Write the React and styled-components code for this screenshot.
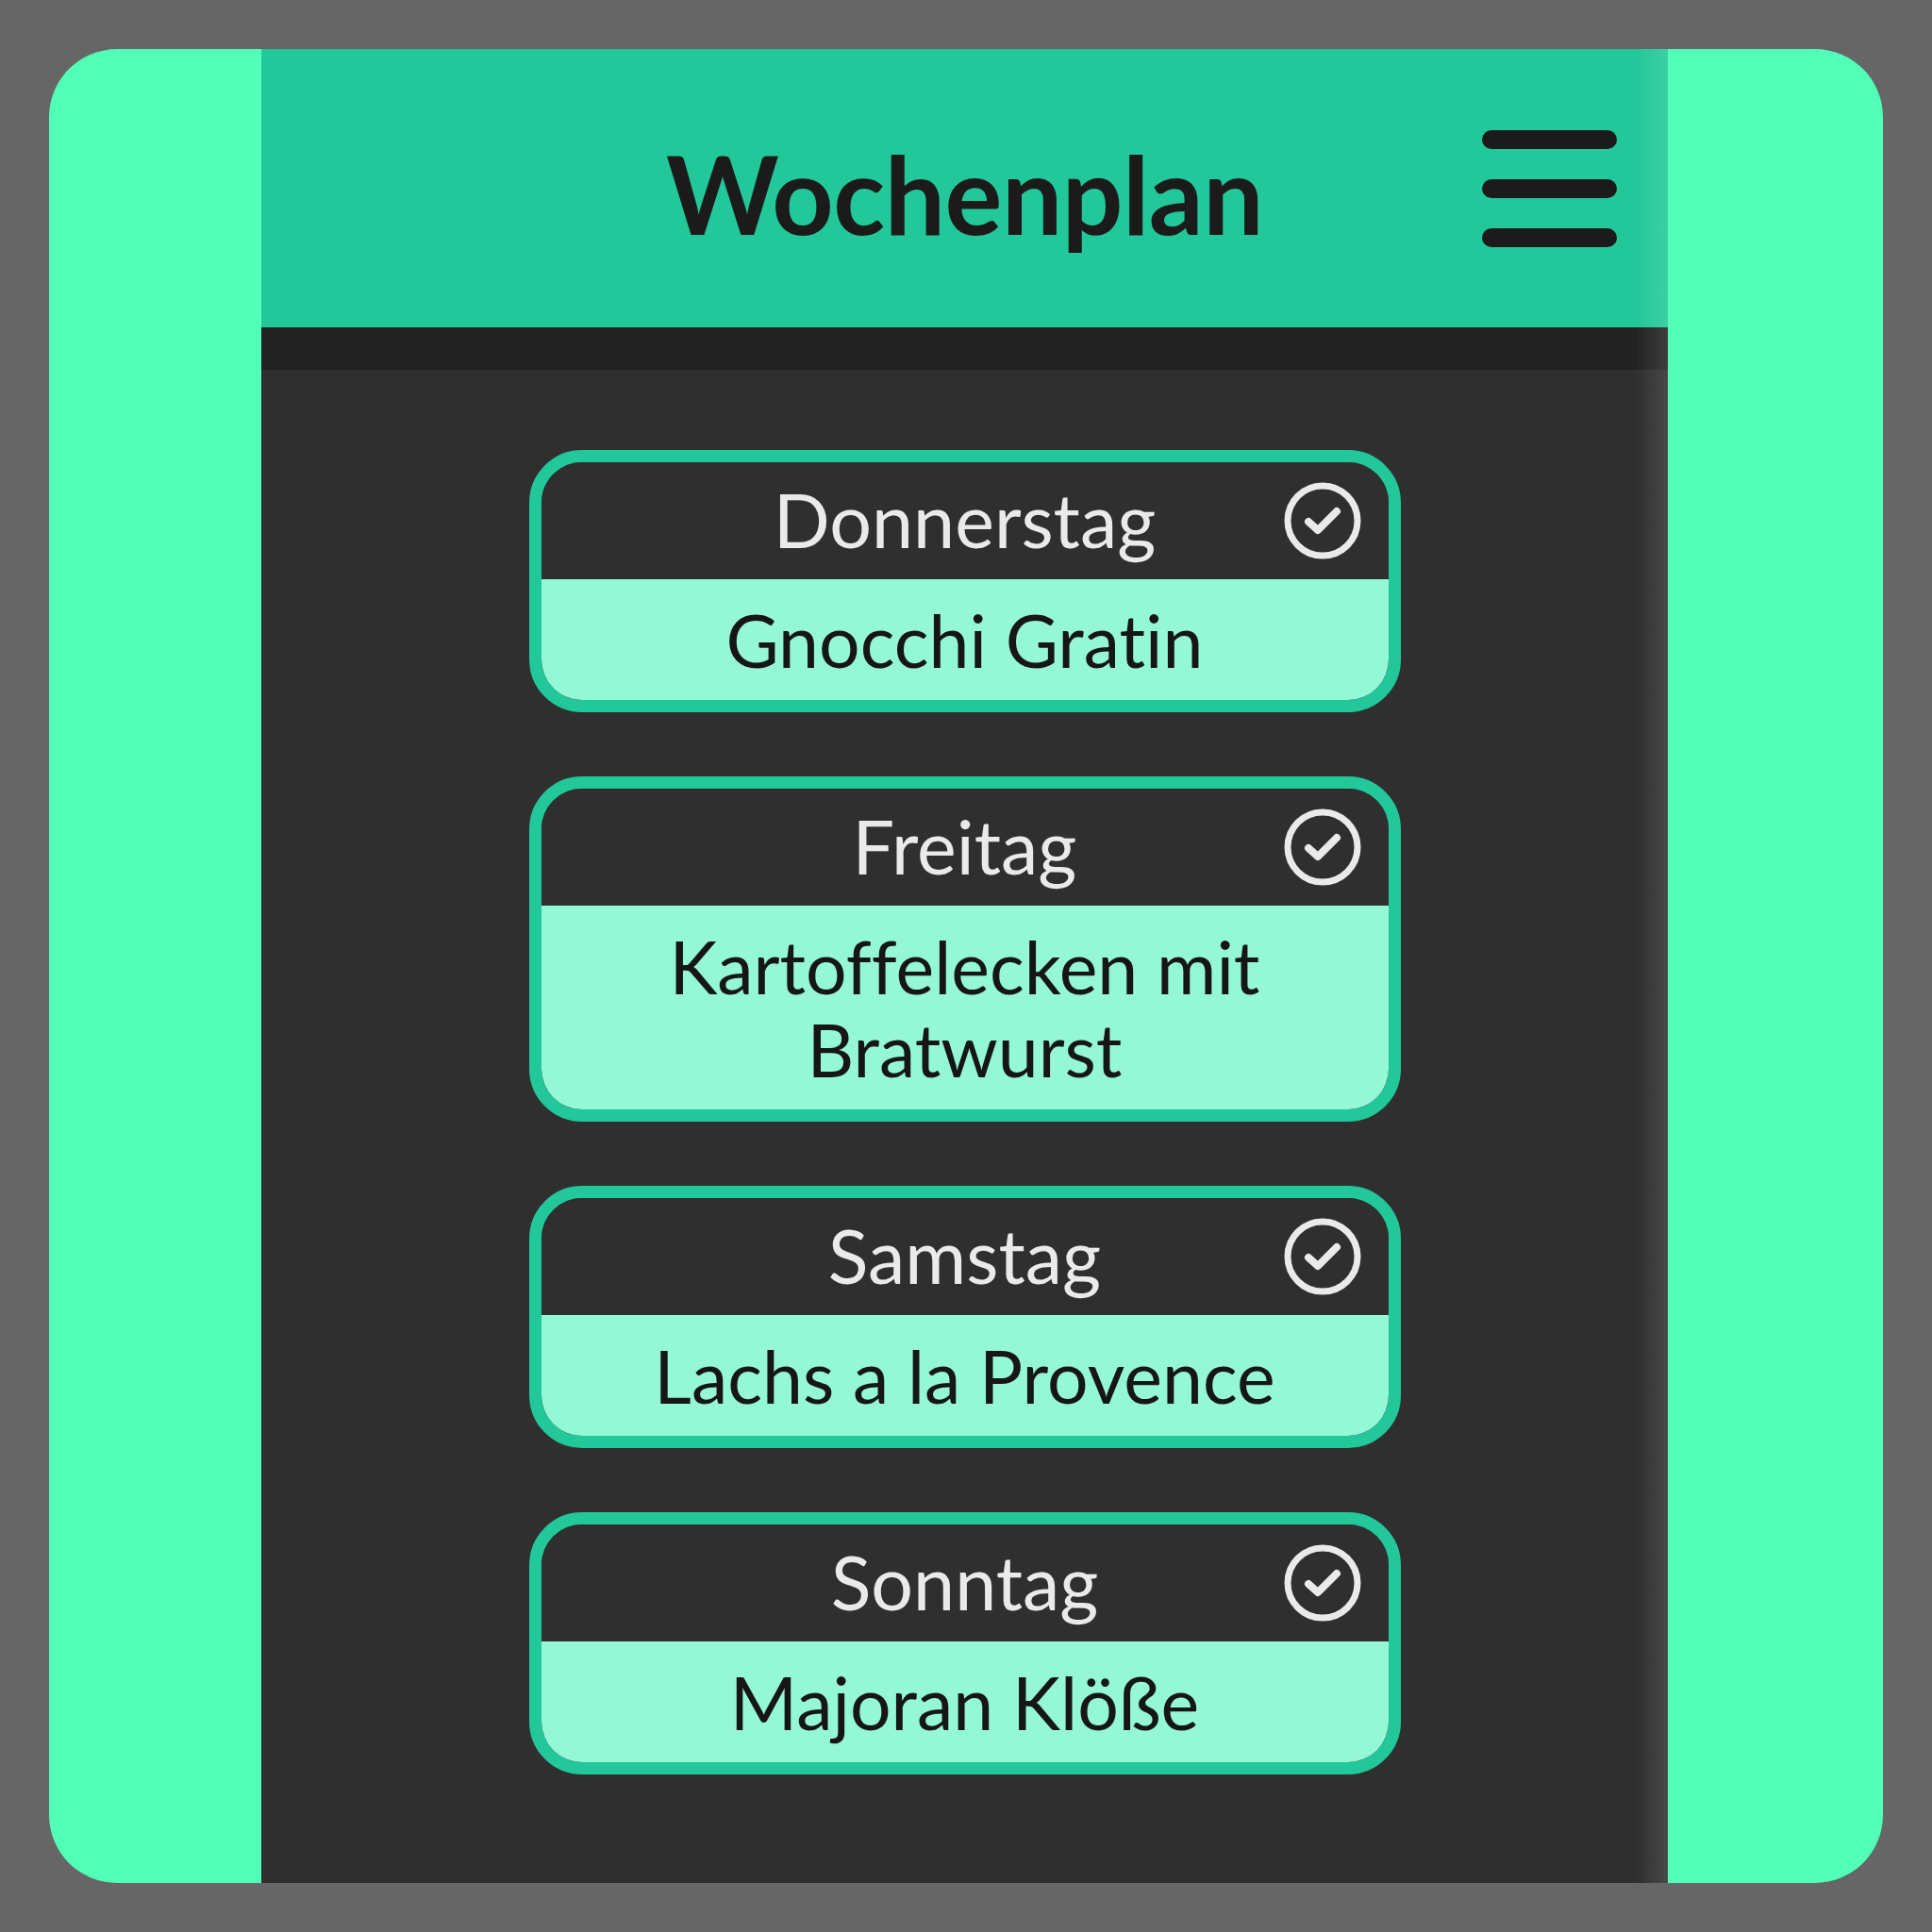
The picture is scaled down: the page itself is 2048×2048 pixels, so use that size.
import React from "react";
import styled, { createGlobalStyle } from "styled-components";

const Global = createGlobalStyle`
  html, body { margin: 0; padding: 0; background: #666666; }
  * { box-sizing: border-box; }
  body { font-family: Lato, "Noto Sans", sans-serif; font-variant-ligatures: none; }
`;

const Page = styled.div`
  width: 2048px;
  height: 2048px;
  padding: 52px;
  background: #666666;
`;

const Frame = styled.div`
  width: 1944px;
  height: 1944px;
  border-radius: 72px;
  overflow: hidden;
  background: #52ffb7;
  display: grid;
  grid-template-columns: 225px 1491px 228px;
`;

const Column = styled.div`
  position: relative;
  display: flex;
  flex-direction: column;
  background: #2f2f2f;
  &::after {
    content: "";
    position: absolute;
    top: 0;
    right: 0;
    bottom: 0;
    width: 34px;
    pointer-events: none;
    background: linear-gradient(to right, rgba(255,255,255,0), rgba(255,255,255,0.12));
  }
`;

const Header = styled.header`
  height: 340px;
  background: #22c89a;
  border-bottom: 45px solid #232323;
  display: grid;
  grid-template-columns: 1fr auto 1fr;
  align-items: center;
`;

const Title = styled.h1`
  grid-column: 2;
  margin: 0;
  padding-top: 10px;
  font-family: Lato, sans-serif;
  font-weight: 700;
  font-size: 114px;
  letter-spacing: -0.5px;
  color: #1b1b1b;
`;

const MenuButton = styled.div`
  grid-column: 3;
  justify-self: end;
  margin-right: 54px;
  width: 143px;
  display: flex;
  flex-direction: column;
  gap: 32px;
`;

const MenuLine = styled.span`
  display: block;
  height: 20px;
  border-radius: 10px;
  background: #1b1b1b;
`;

const List = styled.main`
  display: flex;
  flex-direction: column;
  align-items: center;
  gap: 68px;
  padding: 85px 0 0 0;
`;

const Card = styled.section`
  width: 924px;
  border: 13px solid #22c79a;
  border-radius: 56px;
  overflow: hidden;
  display: flex;
  flex-direction: column;
`;

const DayRow = styled.div`
  height: 124px;
  background: #2f2f2f;
  display: grid;
  grid-template-columns: 1fr auto 1fr;
  align-items: center;
`;

const DayName = styled.span`
  grid-column: 2;
  font-family: Lato, sans-serif;
  font-size: 79px;
  color: #ece9e9;
  line-height: 1;
  padding-bottom: 4px;
`;

const CheckWrap = styled.span`
  grid-column: 3;
  justify-self: end;
  margin-right: 28px;
  display: flex;
`;

const MealRow = styled.div`
  background: #94f8d6;
  padding: 20px 90px;
  text-align: center;
  font-family: Lato, sans-serif;
  font-size: 77px;
  line-height: 88px;
  color: #161616;
`;

const CheckIcon = () => (
  <svg width="84" height="84" viewBox="0 0 84 84" fill="none">
    <circle cx="42" cy="42" r="37" stroke="#ece9e9" strokeWidth="7" />
    <path d="M27 43 L37 52 L57 32" stroke="#ece9e9" strokeWidth="8" strokeLinecap="round" strokeLinejoin="round" />
  </svg>
);

const days = [
  { day: "Donnerstag", meal: "Gnocchi Gratin" },
  { day: "Freitag", meal: "Kartoffelecken mit Bratwurst" },
  { day: "Samstag", meal: "Lachs a la Provence" },
  { day: "Sonntag", meal: "Majoran Klöße" },
];

export default function App() {
  return (
    <>
      <Global />
      <Page>
        <Frame>
          <div />
          <Column>
            <Header>
              <Title>Wochenplan</Title>
              <MenuButton>
                <MenuLine />
                <MenuLine />
                <MenuLine />
              </MenuButton>
            </Header>
            <List>
              {days.map((d) => (
                <Card key={d.day}>
                  <DayRow>
                    <DayName>{d.day}</DayName>
                    <CheckWrap>
                      <CheckIcon />
                    </CheckWrap>
                  </DayRow>
                  <MealRow>{d.meal}</MealRow>
                </Card>
              ))}
            </List>
          </Column>
          <div />
        </Frame>
      </Page>
    </>
  );
}
